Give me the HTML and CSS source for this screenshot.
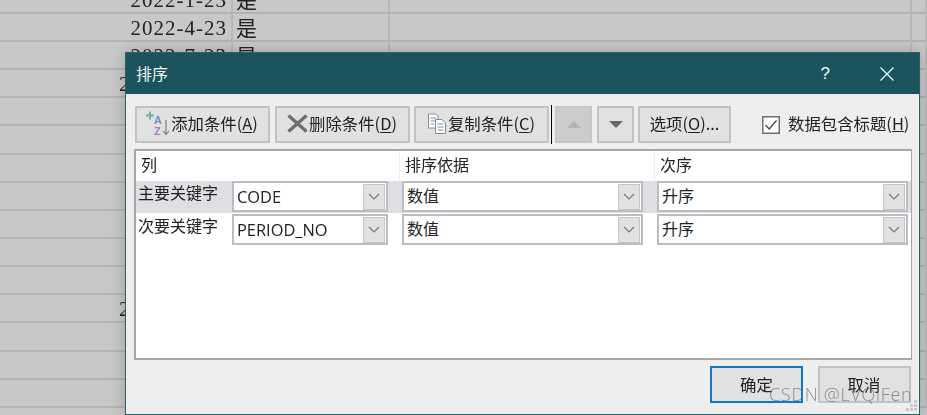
FILE: index.html
```html
<!DOCTYPE html>
<html lang="zh">
<head>
<meta charset="utf-8">
<title>排序</title>
<link rel="stylesheet" href="styles.css">
</head>
<body>
<div class="sheet">
  <div class="cell date">2022-1-23</div><div class="cell flag">是</div><div class="cell"></div><div class="cell"></div>
  <div class="cell date">2022-4-23</div><div class="cell flag">是</div><div class="cell"></div><div class="cell"></div>
  <div class="cell date">2022-7-23</div><div class="cell flag">是</div><div class="cell"></div><div class="cell"></div>
  <div class="cell date">2022-10-23</div><div class="cell flag"></div><div class="cell"></div><div class="cell"></div>
  <div class="cell"></div><div class="cell"></div><div class="cell"></div><div class="cell"></div>
  <div class="cell"></div><div class="cell"></div><div class="cell"></div><div class="cell"></div>
  <div class="cell"></div><div class="cell"></div><div class="cell"></div><div class="cell"></div>
  <div class="cell"></div><div class="cell"></div><div class="cell"></div><div class="cell"></div>
  <div class="cell"></div><div class="cell"></div><div class="cell"></div><div class="cell"></div>
  <div class="cell"></div><div class="cell"></div><div class="cell"></div><div class="cell"></div>
  <div class="cell"></div><div class="cell"></div><div class="cell"></div><div class="cell"></div>
  <div class="cell date">2022-10-23</div><div class="cell"></div><div class="cell"></div><div class="cell"></div>
  <div class="cell"></div><div class="cell"></div><div class="cell"></div><div class="cell"></div>
  <div class="cell"></div><div class="cell"></div><div class="cell"></div><div class="cell"></div>
  <div class="cell"></div><div class="cell"></div><div class="cell"></div><div class="cell"></div>
</div>

<section class="dialog">
  <header class="titlebar">
    <span class="title">排序</span>
    <span class="help">?</span>
    <svg class="close" width="14" height="14" viewBox="0 0 14 14"><path d="M0.5 0.5L13.5 13.5M13.5 0.5L0.5 13.5" stroke="#f2f6f6" stroke-width="1.2" fill="none"/></svg>
  </header>
  <div class="body">
    <div class="toolbar">
      <button class="btn wide">
        <svg class="ico" width="24" height="26" viewBox="0 0 24 26">
          <path d="M0 5.5H8M4 1.5V9.500" stroke="#6fb39b" stroke-width="2" fill="none"/>
          <text x="8" y="14" class="az az-a">A</text>
          <text x="8" y="25" class="az az-z">Z</text>
          <path d="M20 10V24M17 21L20 24.500L23 21" stroke="#777" stroke-width="1.100" fill="none"/>
        </svg>
        <span>添加条件(<u>A</u>)</span>
      </button>
      <button class="btn wide">
        <svg class="ico" width="21" height="19" viewBox="0 0 21 19"><path d="M1.500 1.500L19.500 17.500M19.500 1.500L1.500 17.500" stroke="#707070" stroke-width="3.400" fill="none"/></svg>
        <span>删除条件(<u>D</u>)</span>
      </button>
      <button class="btn wide">
        <svg class="ico" width="20" height="21" viewBox="0 0 20 21">
          <path d="M1.500 1H9L11 3V15H1.500Z" fill="#fff" stroke="#8a8a8a"/>
          <path d="M3.500 5H9M3.500 8H9M3.500 11H7" stroke="#6d94c2"/>
          <path d="M8.500 6.500H15L18.500 10V20.500H8.500Z" fill="#fff" stroke="#8a8a8a"/>
          <path d="M10.500 11H16.500M10.500 14H16.500M10.500 17H16.500" stroke="#6d94c2"/>
        </svg>
        <span>复制条件(<u>C</u>)</span>
      </button>
      <i class="sep"></i>
      <button class="btn arrow off"><i class="tri up"></i></button>
      <button class="btn arrow"><i class="tri down"></i></button>
      <button class="btn options"><span>选项(<u>O</u>)...</span></button>
      <label class="check">
        <svg class="box" width="18" height="18" viewBox="0 0 18 18"><rect x="0.750" y="0.750" width="16.500" height="16.500" fill="#fff" stroke="#6e6e6e" stroke-width="1.500"/><path d="M3.500 9L7.200 13L14.500 4.500" fill="none" stroke="#444" stroke-width="1.300"/></svg>
        <span>数据包含标题(<u>H</u>)</span>
      </label>
    </div>

    <div class="table">
      <div class="thead">
        <div class="th col-key">列</div>
        <div class="th col-on">排序依据</div>
        <div class="th col-order">次序</div>
      </div>
      <div class="row active">
        <div class="rowlabel">主要关键字</div>
        <div class="combo c1"><span class="val latin">CODE</span><span class="drop"><svg width="12" height="7" viewBox="0 0 12 7"><path d="M1 1L6 6L11 1" fill="none" stroke="#777" stroke-width="1.100"/></svg></span></div>
        <div class="combo c2"><span class="val">数值</span><span class="drop"><svg width="12" height="7" viewBox="0 0 12 7"><path d="M1 1L6 6L11 1" fill="none" stroke="#777" stroke-width="1.100"/></svg></span></div>
        <div class="combo c3"><span class="val">升序</span><span class="drop"><svg width="12" height="7" viewBox="0 0 12 7"><path d="M1 1L6 6L11 1" fill="none" stroke="#777" stroke-width="1.100"/></svg></span></div>
      </div>
      <div class="row next">
        <div class="rowlabel">次要关键字</div>
        <div class="combo c1"><span class="val latin">PERIOD_NO</span><span class="drop"><svg width="12" height="7" viewBox="0 0 12 7"><path d="M1 1L6 6L11 1" fill="none" stroke="#777" stroke-width="1.100"/></svg></span></div>
        <div class="combo c2"><span class="val">数值</span><span class="drop"><svg width="12" height="7" viewBox="0 0 12 7"><path d="M1 1L6 6L11 1" fill="none" stroke="#777" stroke-width="1.100"/></svg></span></div>
        <div class="combo c3"><span class="val">升序</span><span class="drop"><svg width="12" height="7" viewBox="0 0 12 7"><path d="M1 1L6 6L11 1" fill="none" stroke="#777" stroke-width="1.100"/></svg></span></div>
      </div>
    </div>

    <div class="footer">
      <button class="btn action primary">确定</button>
      <button class="btn action">取消</button>
    </div>
    <svg class="grip" width="13" height="13" viewBox="0 0 13 13"><path d="M9 0h3v3H9zM5 4h3v3H5zM9 4h3v3H9zM1 8h3v3H1zM5 8h3v3H5zM9 8h3v3H9z" fill="#c9c9c9"/></svg>
  </div>
</section>
<div class="watermark">CSDN @LVQiFen</div>
</body>
</html>
```

FILE: styles.css
```css
* { box-sizing: border-box; }
html, body { margin: 0; height: 100%; }
body {
  width: 927px;
  height: 415px;
  overflow: hidden;
  position: relative;
  background: #c8c8c8;
  font-family: "Noto Sans CJK SC", "Noto Sans", sans-serif;
  color: #222;
  filter: blur(.3px);
}

.sheet {
  display: grid;
  grid-template-columns: 233px 157px 522px 15px;
  grid-auto-rows: 28.17px;
  margin-top: -14.400px;
}
.cell {
  border-bottom: 2px solid #b4b4b4;
  border-right: 2px solid #b8b8b8;
  font-size: 21px;
  line-height: 28px;
  white-space: nowrap;
}
.date {
  font-family: "Liberation Serif", "Noto Sans CJK SC", serif;
  letter-spacing: 1px;
  text-align: right;
  padding-right: 4px;
  direction: rtl;
  unicode-bidi: plaintext;
}
.flag { padding-left: 3px; font-size: 21px; line-height: 26px; }

.dialog {
  position: absolute;
  left: 125px;
  top: 52px;
  width: 795px;
  height: 363px;
  border: 1px solid #2a6068;
  background: #eeeeee;
  box-shadow: 0 0 14px rgba(0, 0, 0, .22);
  display: flex;
  flex-direction: column;
}
.titlebar {
  height: 41px;
  flex: none;
  background: #1b545c;
  color: #f2f6f6;
  display: flex;
  align-items: center;
  padding-left: 10px;
  font-size: 16px;
}
.title { flex: 1; margin-bottom: 2px; }
.help { font-family: "Liberation Sans", sans-serif; font-size: 17px; margin-right: 50px; }
.close { margin-right: 25px; }

.body { position: relative; flex: 1; display: flex; flex-direction: column; padding: 11px 8px 0; }

.toolbar { display: flex; align-items: center; height: 39px; margin-left: 1px; }
.btn {
  font: inherit;
  font-size: 16.400px;
  color: #222;
  background: #e1e1e1;
  border: 2px solid #c2c2c2;
  padding: 0 0 3px;
  height: 37px;
  display: flex;
  align-items: center;
  justify-content: center;
  white-space: nowrap;
}
.btn u { text-underline-offset: 2px; }
.wide { width: 135px; margin-right: 5px; gap: 1px; }
.wide:nth-child(2) { margin-right: 4px; }
.wide:nth-child(3) { margin-right: 2px; }
.ico { flex: none; margin-left: -1px; }
.az { font-family: "Liberation Sans", sans-serif; font-size: 11px; font-weight: 700; }
.az-a { fill: #6d94c2; }
.az-z { fill: #a77fc4; }
.sep { width: 1px; height: 39px; background: #000; margin-right: 3px; }
.arrow { width: 37px; margin-right: 5px; padding: 0; }
.arrow + .arrow { margin-right: 4px; width: 37px; }
.off { background: #cccccc; border-color: #c6c6c6; }
.tri { width: 0; height: 0; border-left: 7px solid transparent; border-right: 7px solid transparent; }
.up { border-bottom: 7px solid #b4b4b4; }
.down { border-top: 7px solid #666; }
.options { width: 93px; }
.check { display: flex; align-items: center; gap: 8px; margin-left: 31px; font-size: 16.400px; }
.check span { margin-bottom: 3px; }

.table {
  margin-top: 5px;
  width: 778px;
  height: 211px;
  background: #fff;
  border: 2px solid #a6a6ac;
  border-right-width: 1px;
}
.thead { display: flex; height: 30px; }
.th { font-size: 16px; line-height: 26px; border-right: 1px solid #eeeeee; }
.col-key { width: 264px; padding-left: 5px; }
.col-on { width: 255px; padding-left: 5px; }
.col-order { flex: 1; padding-left: 5px; border-right: 0; }

.row {
  display: grid;
  grid-template-columns: 96px 170px 255px 251px;
  height: 32px;
}
.next { padding-top: 1px; }
.active { background: #dedee3; }
.rowlabel { font-size: 16px; line-height: 23px; padding-left: 2px; }
.combo {
  height: 31px;
  background: #fff;
  border: 2px solid #bcbcc2;
  display: flex;
  align-items: center;
  justify-content: space-between;
  padding-right: 1px;
  font-size: 16px;
}
.c1 { margin-right: 14px; }
.c2 { margin-right: 14px; }
.val { padding-left: 3px; margin-bottom: 3px; }
.latin { font-family: "Open Sans", sans-serif; font-size: 16.400px; margin-bottom: 1px; }
.drop {
  width: 22px;
  height: 26px;
  background: #e1e1e1;
  border: 1px solid #c6c6c6;
  display: flex;
  align-items: center;
  justify-content: center;
}

.footer { display: flex; gap: 15px; justify-content: flex-end; margin-top: 6px; }
.action { width: 93px; height: 37px; padding: 0 1px 1px 0; }
.primary { border-color: #0a78d7; padding: 0 0 1px; }
.grip { position: absolute; right: 1px; bottom: 1px; }

.watermark {
  position: absolute;
  left: 769px;
  top: 382px;
  font-family: "Open Sans", sans-serif;
  font-weight: 300;
  font-size: 18px;
  letter-spacing: .7px;
  color: rgba(110, 110, 110, .75);
  white-space: nowrap;
}
```
